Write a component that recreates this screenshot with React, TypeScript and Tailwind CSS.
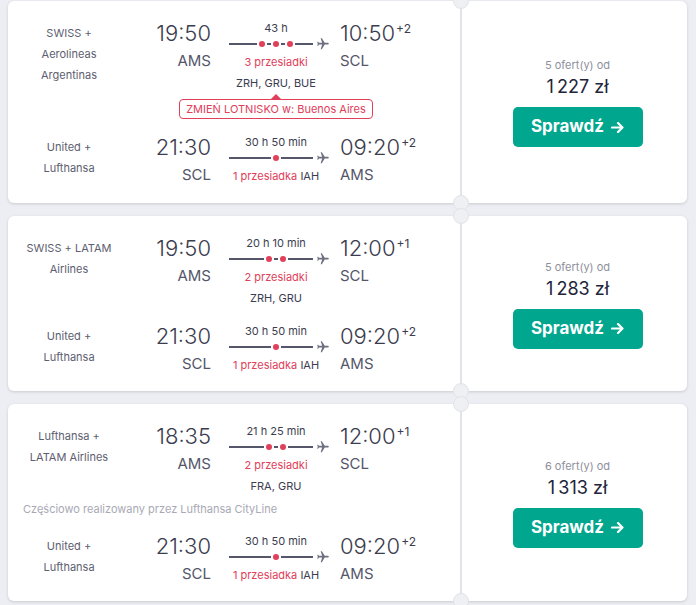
import React from "react";

type Leg = {
  airline: string[];
  depTime: string;
  depCode: string;
  duration: string;
  stops: number;
  stopsLabel: string;
  inlineStop?: string;
  cities?: string;
  arrTime: string;
  arrPlus?: string;
  arrCode: string;
};

type Offer = {
  legs: [Leg, Leg];
  badge?: string;
  note?: string;
  offers: string;
  price: string;
};

const RED = "#e0405a";

const returnLeg: Leg = {
  airline: ["United +", "Lufthansa"],
  depTime: "21:30",
  depCode: "SCL",
  duration: "30 h 50 min",
  stops: 1,
  stopsLabel: "1 przesiadka",
  inlineStop: "IAH",
  arrTime: "09:20",
  arrPlus: "+2",
  arrCode: "AMS",
};

const offers: Offer[] = [
  {
    legs: [
      {
        airline: ["SWISS +", "Aerolineas", "Argentinas"],
        depTime: "19:50",
        depCode: "AMS",
        duration: "43 h",
        stops: 3,
        stopsLabel: "3 przesiadki",
        cities: "ZRH, GRU, BUE",
        arrTime: "10:50",
        arrPlus: "+2",
        arrCode: "SCL",
      },
      returnLeg,
    ],
    badge: "ZMIEŃ LOTNISKO w: Buenos Aires",
    offers: "5 ofert(y) od",
    price: "1\u202F227 zł",
  },
  {
    legs: [
      {
        airline: ["SWISS + LATAM", "Airlines"],
        depTime: "19:50",
        depCode: "AMS",
        duration: "20 h 10 min",
        stops: 2,
        stopsLabel: "2 przesiadki",
        cities: "ZRH, GRU",
        arrTime: "12:00",
        arrPlus: "+1",
        arrCode: "SCL",
      },
      returnLeg,
    ],
    offers: "5 ofert(y) od",
    price: "1\u202F283 zł",
  },
  {
    legs: [
      {
        airline: ["Lufthansa +", "LATAM Airlines"],
        depTime: "18:35",
        depCode: "AMS",
        duration: "21 h 25 min",
        stops: 2,
        stopsLabel: "2 przesiadki",
        cities: "FRA, GRU",
        arrTime: "12:00",
        arrPlus: "+1",
        arrCode: "SCL",
      },
      returnLeg,
    ],
    note: "Częściowo realizowany przez Lufthansa CityLine",
    offers: "6 ofert(y) od",
    price: "1\u202F313 zł",
  },
];

function Connector({ stops }: { stops: number }) {
  const c = 47;
  const sp = 14;
  const xs = Array.from({ length: stops }, (_, i) => c + (i - (stops - 1) / 2) * sp);
  const first = xs[0];
  const last = xs[xs.length - 1];
  return (
    <svg width="100" height="14" viewBox="0 0 100 14" className="ml-[3px] self-start block">
      <line x1="0" y1="7" x2={first - 5} y2="7" stroke="#55566a" strokeWidth="2" />
      {xs.slice(1).map((x, i) => (
        <line key={i} x1={xs[i] + 5} y1="7" x2={x - 5} y2="7" stroke="#55566a" strokeWidth="2" />
      ))}
      <line x1={last + 5} y1="7" x2="84" y2="7" stroke="#55566a" strokeWidth="2" />
      {xs.map((x, i) => (
        <circle key={i} cx={x} cy="7" r="3" fill={RED} />
      ))}
      <g transform="translate(87.04 0.04) scale(0.58) rotate(90 12 12)">
        <path
          d="M21 16v-2l-8-5V3.5c0-.83-.67-1.5-1.5-1.5S10 2.67 10 3.5V9l-8 5v2l8-2.5V19l-2 1.5V22l3.5-1 3.5 1v-1.5L13 19v-5.5l8 2.5z"
          fill="#6e6f80"
        />
      </g>
    </svg>
  );
}

function LegRow({ leg, badge }: { leg: Leg; badge?: string }) {
  return (
    <div className="flex items-start">
      <div className="w-[92px] pt-[4px] text-center text-[11px] leading-[21px] text-[#5d5e70]">
        {leg.airline.map((l) => (
          <div key={l} className="whitespace-nowrap">
            {l}
          </div>
        ))}
      </div>
      <div className="w-[96px] text-right">
        <div className="text-[22px] font-light leading-[28px] text-[#3b3c4e]">{leg.depTime}</div>
        <div className="text-[15px] leading-[27px] text-[#55566a]">{leg.depCode}</div>
      </div>
      <div className="ml-[15px] flex w-[100px] flex-col items-center">
        <div className="text-[11px] leading-[18px] text-[#3c3d4f] whitespace-nowrap">{leg.duration}</div>
        <Connector stops={leg.stops} />
        <div className="text-[11px] leading-[22px] text-[#e0405a] whitespace-nowrap">
          {leg.stopsLabel}
          {leg.inlineStop && <span className="text-[#3c3d4f]"> {leg.inlineStop}</span>}
        </div>
        {leg.cities && (
          <div className="text-[11px] leading-[20px] text-[#3c3d4f] whitespace-nowrap">{leg.cities}</div>
        )}
        {badge && (
          <div className="mt-[1px] flex flex-col items-center">
            <div className="h-0 w-0 border-l-[5px] border-r-[5px] border-b-[5px] border-l-transparent border-r-transparent border-b-[#e0405a]" />
            <div className="h-[20px] whitespace-nowrap rounded-[4px] border border-[#e0405a] bg-white px-[6px] text-[11px] leading-[18px] text-[#e0405a]">
              {badge}
            </div>
          </div>
        )}
      </div>
      <div className="ml-[14px]">
        <div className="flex items-start">
          <span className="text-[22px] font-light leading-[28px] text-[#3b3c4e]">{leg.arrTime}</span>
          {leg.arrPlus && (
            <span className="ml-[1px] mt-[3px] text-[12px] leading-[14px] text-[#3b3c4e]">{leg.arrPlus}</span>
          )}
        </div>
        <div className="text-[15px] leading-[27px] text-[#55566a]">{leg.arrCode}</div>
      </div>
    </div>
  );
}

function Notch({ pos }: { pos: "top" | "bottom" }) {
  return (
    <div
      className={
        "absolute left-1/2 h-[16px] w-[16px] -translate-x-1/2 rounded-full border border-[#e2e3e8] bg-[#eff0f4] " +
        (pos === "top" ? "-top-[8px]" : "-bottom-[8px]")
      }
    />
  );
}

function Card({ offer }: { offer: Offer }) {
  return (
    <div className="flex w-[679px] rounded-[6px] bg-white shadow-[0_1px_3px_0_rgba(37,42,49,0.18)]">
      <div className={"w-[452px] pl-[15px] pt-[18px] " + (offer.badge ? "pb-[15px]" : "pb-[14px]")}>
        <LegRow leg={offer.legs[0]} badge={offer.badge} />
        {offer.note && (
          <div className="mt-[3px] whitespace-nowrap text-[11px] leading-[20px] text-[#a8a9b5]">{offer.note}</div>
        )}
        <div className={offer.note ? "mt-[13px]" : "mt-[14px]"}>
          <LegRow leg={offer.legs[1]} />
        </div>
      </div>
      <div className="relative w-[2px] bg-[#e2e3e8]">
        <Notch pos="top" />
        <Notch pos="bottom" />
      </div>
      <div className="flex flex-1 flex-col items-center justify-center pl-[6px]">
        <div className="text-[11px] leading-[16px] text-[#8e8f9c]">{offer.offers}</div>
        <div className="text-[18px] leading-[28px] text-[#22243a]">{offer.price}</div>
        <button className="mt-[6px] flex h-[40px] w-[130px] items-center justify-center gap-[7px] rounded-[5px] bg-[#00a68e] text-[17px] font-bold text-white">
          <span>Sprawdź</span>
          <svg width="13" height="11" viewBox="0 0 13 11" fill="none">
            <path d="M1 5.5H11.5M7 1L11.5 5.5L7 10" stroke="white" strokeWidth="2.2" strokeLinecap="round" strokeLinejoin="round" />
          </svg>
        </button>
      </div>
    </div>
  );
}

export default function App() {
  return (
    <div className="min-h-screen w-full overflow-hidden bg-[#edeef3] pl-[8px] pt-[1px] font-['Inter',sans-serif]">
      <div className="flex flex-col gap-[13px]">
        {offers.map((o, i) => (
          <Card key={i} offer={o} />
        ))}
      </div>
    </div>
  );
}
